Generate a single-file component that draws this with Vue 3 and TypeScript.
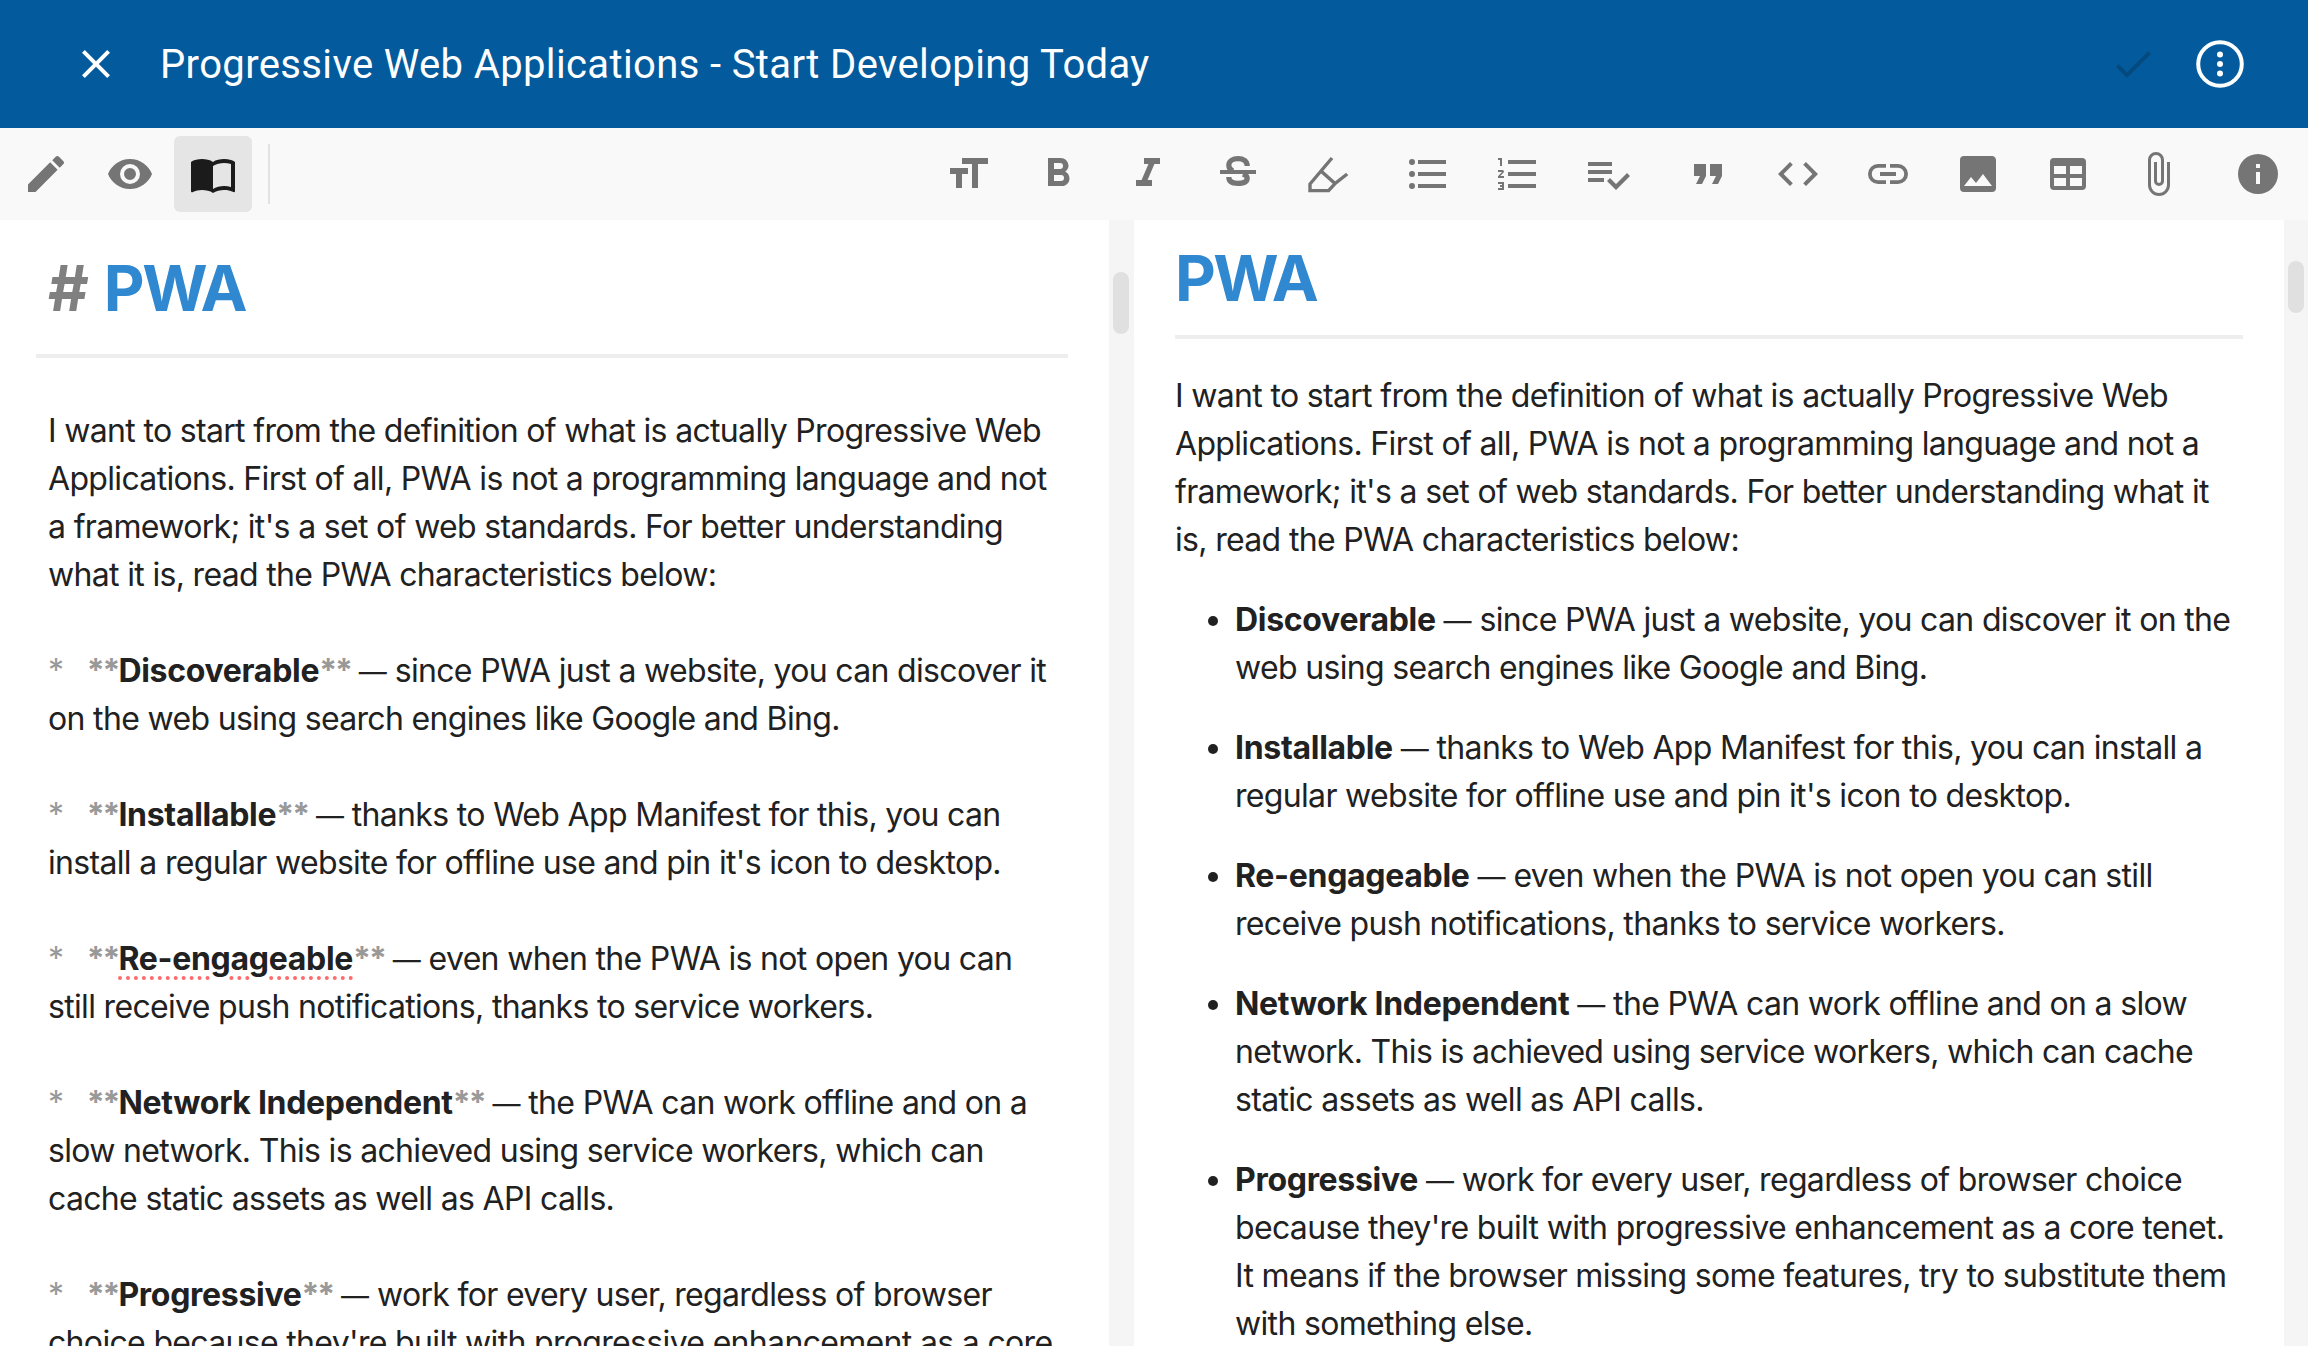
<script setup lang="ts">
interface Item {
  term: string;
  text: string;
  typo?: boolean;
}

const intro =
  "I want to start from the definition of what is actually Progressive Web Applications. First of all, PWA is not a programming language and not a framework; it's a set of web standards. For better understanding what it is, read the PWA characteristics below:";

const items: Item[] = [
  { term: 'Discoverable', text: 'since PWA just a website, you can discover it on the web using search engines like Google and Bing.' },
  { term: 'Installable', text: "thanks to Web App Manifest for this, you can install a regular website for offline use and pin it's icon to desktop." },
  { term: 'Re-engageable', typo: true, text: 'even when the PWA is not open you can still receive push notifications, thanks to service workers.' },
  { term: 'Network Independent', text: 'the PWA can work offline and on a slow network. This is achieved using service workers, which can cache static assets as well as API calls.' },
  { term: 'Progressive', text: "work for every user, regardless of browser choice because they're built with progressive enhancement as a core tenet. It means if the browser missing some features, try to substitute them with something else." },
];

const modeIcons = [
  { name: 'edit', d: 'M20.71,7.04C21.1,6.65 21.1,6 20.71,5.63L18.37,3.29C18,2.9 17.35,2.9 16.96,3.29L15.12,5.12L18.87,8.87M3,17.25V21H6.75L17.81,9.93L14.06,6.18L3,17.25Z' },
  { name: 'preview', d: 'M12,9A3,3 0 0,0 9,12A3,3 0 0,0 12,15A3,3 0 0,0 15,12A3,3 0 0,0 12,9M12,17A5,5 0 0,1 7,12A5,5 0 0,1 12,7A5,5 0 0,1 17,12A5,5 0 0,1 12,17M12,4.5C7,4.5 2.73,7.61 1,12C2.73,16.39 7,19.5 12,19.5C17,19.5 21.27,16.39 23,12C21.27,7.61 17,4.5 12,4.5Z' },
  { name: 'split', active: true, d: 'M21,5C19.89,4.65 18.67,4.5 17.5,4.5C15.55,4.5 13.45,4.9 12,6C10.55,4.9 8.45,4.5 6.5,4.5C4.55,4.5 2.45,4.9 1,6V20.65C1,20.9 1.25,21.15 1.5,21.15C1.6,21.15 1.65,21.1 1.75,21.1C3.1,20.45 5.05,20 6.5,20C8.45,20 10.55,20.4 12,21.5C13.35,20.65 15.8,20 17.5,20C19.15,20 20.85,20.3 22.25,21.05C22.35,21.1 22.4,21.1 22.5,21.1C22.75,21.1 23,20.85 23,20.6V6C22.4,5.55 21.75,5.25 21,5M21,18.5C19.9,18.15 18.7,18 17.5,18C15.8,18 13.35,18.65 12,19.5V8C13.35,7.15 15.8,6.5 17.5,6.5C18.7,6.5 19.9,6.65 21,7V18.5Z' },
];

// these two are drawn from lines, the rest are filled
const strikeIcon = 'M16.6 8C16.6 5.5 14.6 4.3 12 4.3C9.4 4.3 7.4 5.5 7.4 7.6C7.4 9 8.2 10 9.5 10.6M14.5 12C16 12.6 16.6 13.3 16.6 14C16.6 16 14.6 16.7 12 16.7C9.4 16.7 7.4 15.8 7.4 13.5';
const markerIcon = 'M14 4L8.5 10.5L15.5 16.8L21.6 12M8.5 10.5L3 17V20.3H12.3L15.5 16.8';

const formatGroups = [
  [
    'M3,12H6V19H9V12H12V9H3M9,4V7H14V19H17V7H22V4H9Z',
    'M13.5,15.5H10V12.5H13.5A1.5,1.5 0 0,1 15,14A1.5,1.5 0 0,1 13.5,15.5M10,6.5H13A1.5,1.5 0 0,1 14.5,8A1.5,1.5 0 0,1 13,9.5H10M15.6,10.79C16.57,10.11 17.25,9 17.25,8C17.25,5.74 15.5,4 13.25,4H7V18H14.04C16.14,18 17.75,16.3 17.75,14.21C17.75,12.69 16.89,11.39 15.6,10.79Z',
    'M10,4V7H12.21L8.79,15H6V18H14V15H11.79L15.21,7H18V4H10Z',
    strikeIcon,
    markerIcon,
  ],
  [
    'M7,5H21V7H7V5M7,13V11H21V13H7M4,4.5A1.5,1.5 0 0,1 5.5,6A1.5,1.5 0 0,1 4,7.5A1.5,1.5 0 0,1 2.5,6A1.5,1.5 0 0,1 4,4.5M4,10.5A1.5,1.5 0 0,1 5.5,12A1.5,1.5 0 0,1 4,13.5A1.5,1.5 0 0,1 2.5,12A1.5,1.5 0 0,1 4,10.5M7,19V17H21V19H7M4,16.5A1.5,1.5 0 0,1 5.5,18A1.5,1.5 0 0,1 4,19.5A1.5,1.5 0 0,1 2.5,18A1.5,1.5 0 0,1 4,16.5Z',
    'M7,13V11H21V13H7M7,19V17H21V19H7M7,7V5H21V7H7M3,8V5H2V4H4V8H3M2,17V16H5V20H2V19H4V18.5H3V17.5H4V17H2M4.25,10A0.75,0.75 0 0,1 5,10.75C5,10.95 4.92,11.14 4.79,11.27L3.12,13H5V14H2V13.08L4,11H2V10H4.25Z',
    'M14,10H2V12H14V10M14,6H2V8H14V6M2,16H10V14H2V16M21.5,11.5L23,13L16,20L11.5,15.5L13,14L16,17L21.5,11.5Z',
  ],
  [
    'M14,17H17L19,13V7H13V13H16M6,17H9L11,13V7H5V13H8L6,17Z',
    'M14.6,16.6L19.2,12L14.6,7.4L16,6L22,12L16,18L14.6,16.6M9.4,16.6L4.8,12L9.4,7.4L8,6L2,12L8,18L9.4,16.6Z',
    'M3.9,12C3.9,10.29 5.29,8.9 7,8.9H11V7H7A5,5 0 0,0 2,12A5,5 0 0,0 7,17H11V15.1H7C5.29,15.1 3.9,13.71 3.9,12M8,13H16V11H8V13M17,7H13V8.9H17C18.71,8.9 20.1,10.29 20.1,12C20.1,13.71 18.71,15.1 17,15.1H13V17H17A5,5 0 0,0 22,12A5,5 0 0,0 17,7Z',
    'M8.5,13.5L11,16.5L14.5,12L19,18H5M21,19V5C21,3.89 20.1,3 19,3H5A2,2 0 0,0 3,5V19A2,2 0 0,0 5,21H19A2,2 0 0,0 21,19Z',
    'M5,4H19A2,2 0 0,1 21,6V18A2,2 0 0,1 19,20H5A2,2 0 0,1 3,18V6A2,2 0 0,1 5,4M5,8V12H11V8H5M13,8V12H19V8H13M5,14V18H11V14H5M13,14V18H19V14H13Z',
    'M16.5,6V17.5A4,4 0 0,1 12.5,21.5A4,4 0 0,1 8.5,17.5V5A2.5,2.5 0 0,1 11,2.5A2.5,2.5 0 0,1 13.5,5V15.5A1,1 0 0,1 12.5,16.5A1,1 0 0,1 11.5,15.5V6H10V15.5A2.5,2.5 0 0,0 12.5,18A2.5,2.5 0 0,0 15,15.5V5A4,4 0 0,0 11,1A4,4 0 0,0 7,5V17.5A5.5,5.5 0 0,0 12.5,23A5.5,5.5 0 0,0 18,17.5V6H16.5Z',
  ],
  ['M13,9H11V7H13M13,17H11V11H13M12,2A10,10 0 0,0 2,12A10,10 0 0,0 12,22A10,10 0 0,0 22,12A10,10 0 0,0 12,2Z'],
];
</script>

<template>
  <div class="app">
    <header class="topbar">
      <svg class="icon close" viewBox="0 0 24 24">
        <path d="M19,6.41L17.59,5L12,10.59L6.41,5L5,6.41L10.59,12L5,17.59L6.41,19L12,13.41L17.59,19L19,17.59L13.41,12L19,6.41Z" />
      </svg>
      <h1 class="title">Progressive Web Applications - Start Developing Today</h1>
      <svg class="icon check" viewBox="0 0 24 24">
        <path d="M21,7L9,19L3.5,13.5L4.91,12.09L9,16.17L19.59,5.59L21,7Z" />
      </svg>
      <svg class="icon more" viewBox="0 0 48 48">
        <circle class="more-ring" cx="24" cy="24" r="21.8" />
        <circle cx="24" cy="14.5" r="3" />
        <circle cx="24" cy="24" r="3" />
        <circle cx="24" cy="33.5" r="3" />
      </svg>
    </header>

    <nav class="toolbar">
      <div class="modes">
        <button v-for="m in modeIcons" :key="m.name" class="mode" :class="{ active: m.active }">
          <svg class="icon" viewBox="0 0 24 24"><path :d="m.d" /></svg>
        </button>
      </div>
      <span class="divider"></span>
      <div class="formats">
        <div v-for="(group, g) in formatGroups" :key="g" class="group">
          <button v-for="d in group" :key="d" class="tool">
            <svg
              class="icon"
              :class="{ marker: d === markerIcon, strike: d === strikeIcon }"
              viewBox="0 0 24 24"
            >
              <rect v-if="d === strikeIcon" x="3" y="10" width="18" height="2" />
              <path :d="d" />
            </svg>
          </button>
        </div>
      </div>
    </nav>

    <main class="editor">
      <section class="pane source">
        <h2 class="src-heading"><span class="hash">#</span> PWA</h2>
        <p class="src-text">{{ intro }}</p>
        <p v-for="item in items" :key="item.term" class="src-text"><span class="mark">{{ '*   ' }}</span><span class="mark bold">**</span><strong :class="{ typo: item.typo }">{{ item.term }}</strong><span class="mark bold">**</span><span class="dash">{{ ' — ' }}</span>{{ item.text }}</p>
      </section>
      <div class="track"><span class="thumb"></span></div>

      <section class="pane preview">
        <h2 class="heading">PWA</h2>
        <p>{{ intro }}</p>
        <ul>
          <li v-for="item in items" :key="item.term"><strong>{{ item.term }}</strong><span class="dash">{{ ' — ' }}</span>{{ item.text }}</li>
        </ul>
      </section>
      <div class="track right"><span class="thumb"></span></div>
    </main>
  </div>
</template>

<style>
html,
body {
  margin: 0;
  height: 100%;
  overflow: hidden;
  background: #fff;
}
</style>

<style scoped>
.app {
  display: flex;
  flex-direction: column;
  height: 1346px;
  overflow: hidden;
  font-family: Inter, "Liberation Sans", sans-serif;
  color: #212121;
}

.icon {
  display: block;
  width: 48px;
  height: 48px;
  fill: #757575;
}

.icon.marker path,
.icon.strike path {
  fill: none;
  stroke: #757575;
}

.icon.marker path {
  stroke-width: 1.7;
}

.icon.strike path {
  stroke-width: 2.6;
}

.topbar {
  flex: none;
  display: flex;
  align-items: center;
  height: 128px;
  padding: 0 64px 0 72px;
  background: #035a9c;
}

.close {
  fill: #fff;
}

.title {
  flex: 1;
  margin: 0 0 0 40px;
  font-family: Roboto, sans-serif;
  font-size: 40px;
  font-weight: 400;
  letter-spacing: 0.37px;
  color: #fff;
}

.check {
  fill: #044a7f;
  margin-right: 39px;
}

.more {
  fill: #fff;
}

.more-ring {
  fill: none;
  stroke: #fff;
  stroke-width: 4;
}

.toolbar {
  flex: none;
  display: flex;
  align-items: center;
  height: 92px;
  padding: 0 26px 0 22px;
  background: #f9f9f9;
}

.modes {
  display: flex;
  gap: 35.5px;
}

button {
  display: flex;
  align-items: center;
  justify-content: center;
  padding: 0;
  border: 0;
  background: none;
}

.mode {
  width: 48px;
  height: 76px;
  border-radius: 6px;
}

.mode.active {
  width: 78px;
  margin: 0 -15px;
  background: #e5e5e5;
}

.mode.active .icon {
  fill: #1b1b1b;
}

.divider {
  width: 2px;
  height: 60px;
  margin-left: 31px;
  background: #e3e3e3;
}

.formats {
  display: flex;
  gap: 10px;
  margin-left: auto;
}

.group {
  display: flex;
}

.tool {
  width: 90px;
  height: 48px;
}

.group:last-child .tool {
  width: 48px;
  margin-left: 21px;
}

.editor {
  flex: 1;
  display: flex;
  min-height: 0;
}

.pane {
  box-sizing: border-box;
  font-size: 32px;
  line-height: 48px;
  font-weight: 370;
  letter-spacing: -0.67px;
}

.source {
  width: 1109px;
  padding: 29px 41px 0 36px;
}

.src-heading {
  margin: 0 0 49px;
  padding: 0 0 27px 12px;
  border-bottom: 4px solid #eee;
  font-size: 63px;
  line-height: 78px;
  font-weight: 650;
  letter-spacing: -2.5px;
  color: #3088d0;
}

.hash {
  margin-right: 5px;
  color: #808080;
}

.src-text {
  margin: 0 12px 48px 12px;
  white-space: pre-wrap;
}

.mark {
  letter-spacing: -1.1px;
  color: #999;
}

.mark.bold {
  font-weight: 700;
  letter-spacing: -2px;
}

.dash {
  font-size: 28px;
  line-height: 1;
  letter-spacing: 0;
}

strong {
  font-weight: 700;
  letter-spacing: -0.3px;
}

.typo {
  text-decoration: underline dotted #ff6b6b 4px;
  text-underline-offset: 6px;
}

.track {
  flex: none;
  width: 25px;
  padding: 52px 0 0 4px;
  box-sizing: border-box;
  background: #f5f5f5;
}

.track.right {
  width: 24px;
  padding-top: 41px;
}

.thumb {
  display: block;
  width: 16px;
  height: 62px;
  border-radius: 8px;
  background: #e0e0e0;
}

.right .thumb {
  height: 52px;
}

.preview {
  flex: 1;
  min-width: 0;
  padding: 20px 41px 0;
}

.preview p {
  margin: 0 0 32px;
}

.heading {
  margin: 0 0 33px;
  padding: 0 0 19px;
  border-bottom: 4px solid #eee;
  font-size: 63px;
  line-height: 76px;
  font-weight: 650;
  letter-spacing: -2.5px;
  color: #3088d0;
}

ul {
  margin: 0;
  padding: 0 0 0 60px;
}

li {
  margin-bottom: 32px;
}
</style>
